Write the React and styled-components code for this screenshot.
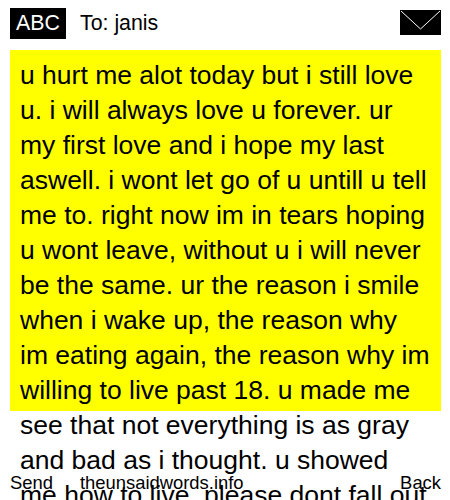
import React from "react";
import styled, { createGlobalStyle } from "styled-components";

const Global = createGlobalStyle`
  html, body {
    margin: 0;
    padding: 0;
    background: #fff;
    overflow: hidden;
  }
`;

const Screen = styled.div`
  position: relative;
  width: 450px;
  height: 500px;
  overflow: hidden;
  background: #fff;
  color: #000;
  font-family: "Liberation Sans", Arial, sans-serif;
`;

const Header = styled.div`
  display: flex;
  align-items: center;
  height: 31px;
  padding: 8px 9px 0 10px;
`;

const Badge = styled.div`
  width: 56px;
  height: 31px;
  background: #000;
  color: #fff;
  font-size: 21.33px;
  line-height: 31px;
  text-align: center;
`;

const Recipient = styled.div`
  flex: 1;
  margin-left: 14px;
  font-size: 21.33px;
`;

const Envelope = styled.svg`
  display: block;
  margin-bottom: 2px;
`;

const Message = styled.div`
  box-sizing: border-box;
  height: 361px;
  margin: 11px 9px 0 10px;
  padding: 8px 10px 0;
  background: #ff0;
  font-size: 26.5px;
  line-height: 35px;
  white-space: nowrap;
`;

const Footer = styled.div`
  position: absolute;
  left: 10px;
  right: 9px;
  bottom: 6px;
  display: flex;
  font-size: 18.4px;
  line-height: 22px;
`;

const Site = styled.span`
  flex: 1;
  margin-left: 27px;
`;

const lines = [
  "u hurt me alot today but i still love",
  "u. i will always love u forever. ur",
  "my first love and i hope my last",
  "aswell. i wont let go of u untill u tell",
  "me to. right now im in tears hoping",
  "u wont leave, without u i will never",
  "be the same. ur the reason i smile",
  "when i wake up, the reason why",
  "im eating again, the reason why im",
  "willing to live past 18. u made me",
  "see that not everything is as gray",
  "and bad as i thought. u showed",
  "me how to live. please dont fall out",
];

export default function App() {
  return (
    <Screen>
      <Global />
      <Header>
        <Badge>ABC</Badge>
        <Recipient>To: janis</Recipient>
        <Envelope width="41" height="25" viewBox="0 0 41 25">
          <rect width="41" height="25" fill="#000" />
          <path d="M1 1 L20.5 19 L40 1" stroke="#fff" strokeWidth="1" fill="none" />
        </Envelope>
      </Header>
      <Message>
        {lines.map((line) => (
          <div key={line}>{line}</div>
        ))}
      </Message>
      <Footer>
        <span>Send</span>
        <Site>theunsaidwords.info</Site>
        <span>Back</span>
      </Footer>
    </Screen>
  );
}
